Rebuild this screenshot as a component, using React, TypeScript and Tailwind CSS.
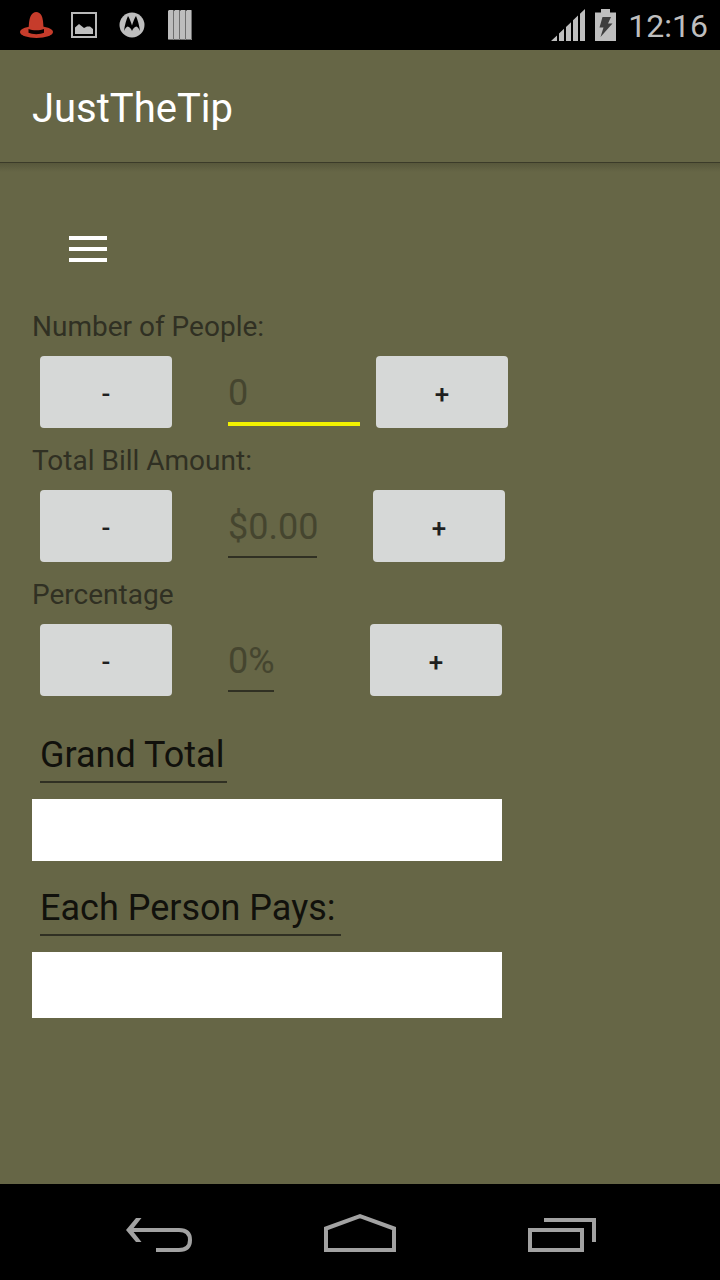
import React, { useState } from "react";

function HatIcon() {
  return (
    <svg width="34" height="28" viewBox="0 0 34 28" aria-hidden="true">
      <ellipse cx="16.500" cy="21" rx="16.500" ry="6" fill="#c63c2b" />
      <path d="M8.700 19C8.700 12 9.500 7 11 4.500 12.300 2.200 14 1 16.200 1s4.200 1.200 5.300 3.500C22.800 7 23.500 12 23.500 19z" fill="#c63c2b" />
      <path d="M8.500 18c4 1.700 11.500 1.700 15.500 0v3.800c-3.500 1.800-12 1.800-15.500 0z" fill="#060000" />
    </svg>
  );
}

function PictureIcon() {
  return (
    <svg width="26" height="26" viewBox="0 0 26 26" aria-hidden="true">
      <rect x="1" y="1" width="24" height="24" fill="none" stroke="#b9b9b9" strokeWidth="2" />
      <path d="M4 15.500l4-3.500 5 4 3-1.500 3 0 3 2.500V22H4z" fill="#bebebe" />
    </svg>
  );
}

function MotorolaIcon() {
  return (
    <svg width="26" height="26" viewBox="0 0 26 26" aria-hidden="true">
      <circle cx="13" cy="13" r="12.500" fill="#bebebe" />
      <path
        d="M9 4C10.600 6.500 12 10 13 13.500 14 10 15.400 6.500 17 4c1.600 3.500 3.200 9 4 15-1-2.200-2-3.700-3.500-4.600C15.500 14.500 14 16.500 13 19c-1-2.500-2.500-4.500-4.500-4.600C7 15.300 6 16.800 5 19 5.800 13 7.400 7.500 9 4z"
        fill="#000"
      />
    </svg>
  );
}

function BarsIcon() {
  return (
    <svg width="24" height="30" viewBox="0 0 24 30" aria-hidden="true">
      {[0, 6, 12, 18].map((x) => (
        <g key={x}>
          <path d={`M${x} 1L${x + 1} 0H${x + 5}L${x + 6} 1V30H${x + 1}L${x} 29z`} fill="#bdbdbd" />
          <path d={`M${x + 5.500} 1V29.500H${x + 1}`} fill="none" stroke="#6e6e6e" />
        </g>
      ))}
    </svg>
  );
}

function SignalIcon() {
  return (
    <svg width="34" height="32" viewBox="0 0 34 32" aria-hidden="true">
      <path
        d="M0 32L6 26.400V32zM8 32V24.500L13 19.800V32zM15 32V17.900L20 13.200V32zM22 32V11.300L27 6.600V32zM29 32V4.700L34 0V32z"
        fill="#bebebe"
      />
    </svg>
  );
}

function BatteryIcon() {
  return (
    <svg width="21" height="32" viewBox="0 0 21 32" aria-hidden="true">
      <path d="M6 0h9v3.500h6V32H0V3.500h6z" fill="#bebebe" />
      <path d="M7.500 8H16l-3 6.500h4.500L5.500 28l3-9.500H4.500z" fill="#3d3d3d" />
    </svg>
  );
}

function StatusBar() {
  return (
    <header className="flex h-[50px] items-center justify-between bg-black pl-5 pr-3">
      <div className="flex items-center gap-[17px]">
        <HatIcon />
        <PictureIcon />
        <span className="ml-[5px] flex items-center gap-[23px]">
          <MotorolaIcon />
          <BarsIcon />
        </span>
      </div>
      <div className="flex items-center gap-2.5">
        <SignalIcon />
        <BatteryIcon />
        <time className="ml-0.5 pt-0.5 text-[32px] leading-9 text-[#bebebe]">12:16</time>
      </div>
    </header>
  );
}

type StepperProps = {
  id: string;
  label: string;
  placeholder: string;
  inputClass: string;
  value: string;
  onChange: (value: string) => void;
};

const stepButton =
  "h-[72px] w-[132px] shrink-0 rounded-[4px] bg-[#d6d8d7] pt-[3px] text-[26px] font-medium leading-8 text-[#1f1f1f]";

function Stepper({ id, label, placeholder, inputClass, value, onChange }: StepperProps) {
  const step = (delta: number) =>
    onChange(String(Math.max(0, (parseFloat(value) || 0) + delta)));
  return (
    <div className="flex flex-col">
      <label htmlFor={id} className="h-[38px] text-[28px] leading-[42px] text-[#303023]">
        {label}
      </label>
      <div className="flex h-24 items-center pl-2">
        <button type="button" aria-label={`Decrease ${label}`} className={stepButton} onClick={() => step(-1)}>
          -
        </button>
        <div className="ml-14 h-[72px] pt-1.5">
          <input
            id={id}
            type="text"
            inputMode="decimal"
            placeholder={placeholder}
            value={value}
            onChange={(e) => onChange(e.target.value)}
            className={`block bg-transparent pt-0.5 text-[36px] text-[#11110c] outline-none placeholder:text-[#45452f] ${inputClass}`}
          />
        </div>
        <button type="button" aria-label={`Increase ${label}`} className={stepButton} onClick={() => step(1)}>
          +
        </button>
      </div>
    </div>
  );
}

export default function App() {
  const [people, setPeople] = useState("");
  const [bill, setBill] = useState("");
  const [percent, setPercent] = useState("");

  return (
    <div className="flex min-h-screen flex-col bg-[#666646] font-[Roboto,sans-serif]">
      <StatusBar />
      <div className="flex h-28 items-center px-8 pt-1.5">
        <h1 className="text-[40px] leading-[48px] text-white">JustTheTip</h1>
      </div>
      <div className="h-2.5 border-t border-[#3b3b29] bg-linear-to-b from-[#57573b] to-[#666646]" />

      <main className="flex flex-1 flex-col items-start px-8 pt-10">
        <button type="button" aria-label="Menu" className="flex h-[74px] w-28 items-center justify-center">
          <svg width="38" height="26" viewBox="0 0 38 26" fill="#fff" aria-hidden="true">
            <path d="M0 0h38v4H0zM0 11h38v4H0zM0 22h38v4H0z" />
          </svg>
        </button>

        <div className="mt-5 flex flex-col">
          <Stepper
            id="people"
            label="Number of People:"
            placeholder="0"
            inputClass="mr-4 h-16 w-[132px] border-b-4 border-[#f2f200]"
            value={people}
            onChange={setPeople}
          />
          <Stepper
            id="bill"
            label="Total Bill Amount:"
            placeholder="$0.00"
            inputClass="mr-14 h-[62px] w-[89px] border-b-2 border-[#303023]"
            value={bill}
            onChange={setBill}
          />
          <Stepper
            id="percent"
            label="Percentage"
            placeholder="0%"
            inputClass="mr-24 h-[62px] w-[46px] border-b-2 border-[#303023]"
            value={percent}
            onChange={setPercent}
          />
        </div>

        <label
          htmlFor="total"
          className="ml-2 mt-6 w-[187px] border-b-2 border-[#303023] pb-[3px] text-[36px] leading-[46px] text-[#11110c]"
        >
          Grand Total
        </label>
        <input id="total" readOnly className="mt-4 h-[62px] w-full max-w-[470px] bg-white px-2 text-[36px] outline-none" />

        <label
          htmlFor="each"
          className="ml-2 mt-6 w-[301px] border-b-2 border-[#303023] pb-[3px] text-[36px] leading-[46px] text-[#11110c]"
        >
          Each Person Pays:
        </label>
        <input id="each" readOnly className="mt-4 h-[66px] w-full max-w-[470px] bg-white px-2 text-[36px] outline-none" />
      </main>

      <nav className="flex h-24 items-center justify-center gap-[132px] bg-black">
        <button type="button" aria-label="Back">
          <svg width="68" height="40" viewBox="-2 0 68 40" fill="none" stroke="#a2a2a2" strokeWidth="4" aria-hidden="true">
            <path d="M6 18H53Q64 18 64 28T53 38H30" />
            <path d="M10 6h5.500L6 18l9.500 12H10L0 18z" fill="#a2a2a2" stroke="none" />
          </svg>
        </button>
        <button type="button" aria-label="Home">
          <svg width="72" height="40" viewBox="0 0 72 40" fill="none" stroke="#a2a2a2" strokeWidth="4" aria-hidden="true">
            <path d="M2 38V16.500L36 4.200 70 16.500V38z" />
          </svg>
        </button>
        <button type="button" aria-label="Recent apps">
          <svg width="68" height="40" viewBox="0 0 68 40" fill="none" stroke="#a2a2a2" strokeWidth="4" aria-hidden="true">
            <path d="M2 18H54V38H2zM16 8H66V30" />
          </svg>
        </button>
      </nav>
    </div>
  );
}
